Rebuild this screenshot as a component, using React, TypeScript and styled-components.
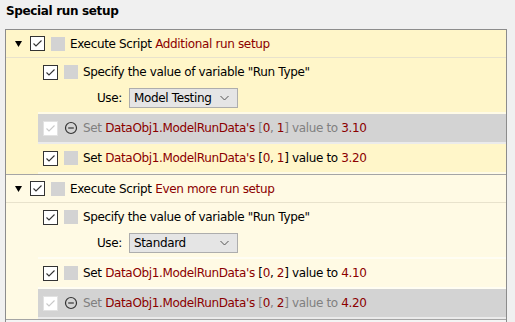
import React from 'react'
import styled, { createGlobalStyle } from 'styled-components'

const GlobalStyle = createGlobalStyle`
  html, body {
    margin: 0;
    background: #f0f0f0;
  }
  body {
    font-family: "DejaVu Sans", "Liberation Sans", sans-serif;
    font-size: 12px;
    letter-spacing: -0.35px;
    color: #000;
  }
`;

const RED = '#8b0000';

type Part = { t: string; red?: boolean };

type Row =
  | { kind: 'variable'; label: string; value: string }
  | { kind: 'set'; obj: string; a: string; b: string; value: string; disabled?: boolean };

type Group = { script: string; bg: string; rows: Row[] };

const groups: Group[] = [
  {
    script: 'Additional run setup',
    bg: '#fff6c9',
    rows: [
      { kind: 'variable', label: 'Specify the value of variable "Run Type"', value: 'Model Testing' },
      { kind: 'set', obj: "DataObj1.ModelRunData's", a: '0', b: '1', value: '3.10', disabled: true },
      { kind: 'set', obj: "DataObj1.ModelRunData's", a: '0', b: '1', value: '3.20' },
    ],
  },
  {
    script: 'Even more run setup',
    bg: '#fffae4',
    rows: [
      { kind: 'variable', label: 'Specify the value of variable "Run Type"', value: 'Standard' },
      { kind: 'set', obj: "DataObj1.ModelRunData's", a: '0', b: '2', value: '4.10' },
      { kind: 'set', obj: "DataObj1.ModelRunData's", a: '0', b: '2', value: '4.20', disabled: true },
    ],
  },
];

const Check = ({ disabled }: { disabled?: boolean }) => (
  <CheckBox $disabled={disabled}>
    <svg width="13" height="13" viewBox="0 0 13 13">
      <polyline
        points="2.5,6.5 5,9 10.5,3.5"
        fill="none"
        stroke={disabled ? '#c9c9c9' : '#333'}
        strokeWidth="1.1"
      />
    </svg>
  </CheckBox>
);

const MinusCircle = () => (
  <IconSlot>
    <svg width="14" height="14" viewBox="0 0 14 14">
      <circle cx="7" cy="7" r="5.5" fill="none" stroke="#333" strokeWidth="1.2" />
      <line x1="4.2" y1="7" x2="9.8" y2="7" stroke="#333" strokeWidth="1.2" />
    </svg>
  </IconSlot>
);

const Chevron = () => (
  <svg width="9" height="6" viewBox="0 0 9 6">
    <polyline points="0.5,1 4.5,5 8.5,1" fill="none" stroke="#555" strokeWidth="1" />
  </svg>
);

const Triangle = () => (
  <svg width="7" height="6" viewBox="0 0 7 6">
    <polygon points="0,0 7,0 3.5,6" fill="#000" />
  </svg>
);

const renderParts = (parts: Part[]) =>
  parts.map((p, i) => (p.red ? <Red key={i}>{p.t}</Red> : <span key={i}>{p.t}</span>));

const SetRow = ({ row }: { row: Extract<Row, { kind: 'set' }> }) => (
  <ChildRow $disabled={row.disabled}>
    <Line>
      <Check disabled={row.disabled} />
      {row.disabled ? <MinusCircle /> : <Square />}
      <Label $disabled={row.disabled}>
        {renderParts([
          { t: 'Set ' },
          { t: row.obj, red: true },
          { t: ' [' },
          { t: row.a, red: true },
          { t: ', ' },
          { t: row.b, red: true },
          { t: '] value to ' },
          { t: row.value, red: true },
        ])}
      </Label>
    </Line>
  </ChildRow>
);

const VariableRow = ({ row }: { row: Extract<Row, { kind: 'variable' }> }) => (
  <ChildRow>
    <Line>
      <Check />
      <Square />
      <Label>{row.label}</Label>
    </Line>
    <UseLine>
      <UseLabel>Use:</UseLabel>
      <Combo>
        <span>{row.value}</span>
        <Chevron />
      </Combo>
    </UseLine>
  </ChildRow>
);

const App = () => {
  return (
    <Page>
      <GlobalStyle />
      <Title>Special run setup</Title>
      <Panel>
        {groups.map((g) => (
          <GroupBox key={g.script} $bg={g.bg}>
            <GroupHeader>
              <Triangle />
              <Check />
              <Square />
              <Label>
                Execute Script <Red>{g.script}</Red>
              </Label>
            </GroupHeader>
            <Children>
              {g.rows.map((r, i) =>
                r.kind === 'variable' ? <VariableRow key={i} row={r} /> : <SetRow key={i} row={r} />
              )}
            </Children>
          </GroupBox>
        ))}
      </Panel>
    </Page>
  );
};

const Page = styled.div`
  width: 515px;
  height: 322px;
  overflow: hidden;
`;

const Title = styled.div`
  height: 29px;
  box-sizing: border-box;
  padding: 3px 0 0 6px;
  line-height: 16px;
  font-weight: bold;
  font-size: 12px;
`;

const Panel = styled.div`
  margin-left: 5px;
  width: 502px;
  box-sizing: border-box;
  border: 1px solid #8c8c8c;
  background: #f4f4f4;
  height: 320px;
`;

const GroupBox = styled.div<{ $bg: string }>`
  background: ${({ $bg }) => $bg};
  border-bottom: 1px solid #a5a5a5;
`;

const GroupHeader = styled.div`
  height: 27px;
  display: flex;
  align-items: center;
  padding-left: 9px;
  border-bottom: 1px solid #e8e2cc;

  > svg {
    margin-right: 8px;
  }
`;

const Children = styled.div`
  padding-left: 32px;
`;

const ChildRow = styled.div<{ $disabled?: boolean }>`
  background: ${({ $disabled }) => ($disabled ? '#d3d3d3' : 'transparent')};
  border-bottom: 2px solid rgba(255, 255, 255, 0.55);
  padding-left: 5px;
`;

const Line = styled.div`
  height: 28px;
  display: flex;
  align-items: center;
`;

const UseLine = styled.div`
  height: 24px;
  padding-bottom: 2px;
  display: flex;
  align-items: center;
`;

const UseLabel = styled.span`
  width: 79px;
  text-align: right;
  margin-right: 7px;
`;

const Combo = styled.div`
  width: 109px;
  height: 20px;
  box-sizing: border-box;
  border: 1px solid #adadad;
  background: #e5e5e5;
  display: flex;
  align-items: center;
  justify-content: space-between;
  padding: 0 8px 0 4px;
`;

const CheckBox = styled.span<{ $disabled?: boolean }>`
  width: 15px;
  height: 15px;
  box-sizing: border-box;
  border: 1px solid ${({ $disabled }) => ($disabled ? '#e2e2e2' : '#333')};
  background: #fff;
  display: inline-flex;
  align-items: center;
  justify-content: center;
  margin-right: 6px;
  flex-shrink: 0;
`;

const Square = styled.span`
  width: 14px;
  height: 14px;
  background: #d3d3d3;
  margin-right: 5px;
  flex-shrink: 0;
`;

const IconSlot = styled.span`
  width: 14px;
  height: 14px;
  display: inline-flex;
  margin-right: 5px;
  flex-shrink: 0;
`;

const Label = styled.span<{ $disabled?: boolean }>`
  white-space: pre;
  color: ${({ $disabled }) => ($disabled ? '#808080' : '#000')};
`;

const Red = styled.span`
  color: ${RED};
`;

export default App;
